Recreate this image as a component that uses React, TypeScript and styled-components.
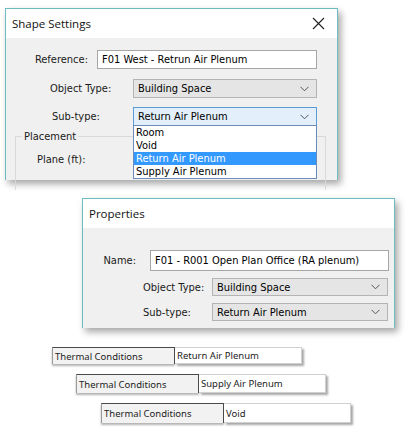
import styled, { createGlobalStyle } from 'styled-components';

const GlobalStyle = createGlobalStyle`
  html, body {
    margin: 0;
    padding: 0;
    background: #ffffff;
  }
  body {
    width: 410px;
    height: 439px;
    overflow: hidden;
    font-family: 'DejaVu Sans Condensed', Tahoma, 'DejaVu Sans', sans-serif;
    font-size: 11px;
    color: #000;
  }
`;

const Page = styled.div`
  display: flex;
  flex-direction: column;
  padding-top: 8px;
`;

const Dialog = styled.div<{ $left: number; $width: number; $height: number; $top: number }>`
  margin-left: ${p => p.$left}px;
  margin-top: ${p => p.$top}px;
  width: ${p => p.$width}px;
  height: ${p => p.$height}px;
  box-sizing: border-box;
  border: 1px solid #6dbcc3;
  border-bottom: none;
  background: #f0f0f0;
  box-shadow: 3px 4px 7px rgba(0, 0, 0, 0.35);
  display: flex;
  flex-direction: column;
`;

const TitleBar = styled.div`
  height: 29px;
  flex: none;
  background: #fff;
  display: flex;
  align-items: center;
  justify-content: space-between;
  padding: 0 12px 0 6px;
  font-family: 'Open Sans', 'Noto Sans', sans-serif;
  font-size: 11.5px;
  color: #111;
`;

const CloseIcon = styled.svg`
  width: 13px;
  height: 13px;
`;

const Body = styled.div<{ $pad: number }>`
  flex: 1;
  position: relative;
  padding-top: ${p => p.$pad}px;
  display: flex;
  flex-direction: column;
  overflow: visible;
`;

const Row = styled.div<{ $gap: number }>`
  display: flex;
  align-items: center;
  margin-bottom: ${p => p.$gap}px;
`;

const Label = styled.div<{ $width: number; $indent?: number; $right?: boolean }>`
  width: ${p => p.$width}px;
  flex: none;
  box-sizing: border-box;
  padding-left: ${p => p.$indent ?? 0}px;
  text-align: ${p => (p.$right ? 'right' : 'left')};
  color: #1a1a1a;
  white-space: nowrap;
`;

const TextBox = styled.div<{ $width: number; $height: number }>`
  width: ${p => p.$width}px;
  height: ${p => p.$height}px;
  box-sizing: border-box;
  border: 1px solid #a6a6a6;
  background: #fff;
  display: flex;
  align-items: center;
  padding-left: 4px;
  white-space: nowrap;
`;

const Select = styled.div<{ $width: number; $height: number; $focused?: boolean }>`
  position: relative;
  width: ${p => p.$width}px;
  height: ${p => p.$height}px;
  box-sizing: border-box;
  border: 1px solid ${p => (p.$focused ? '#5a9bd8' : '#b4b4b4')};
  background: ${p => (p.$focused ? '#e3effa' : '#e5e5e5')};
  display: flex;
  align-items: center;
  justify-content: space-between;
  padding: 0 7px 0 4px;
  white-space: nowrap;
`;

const Chevron = styled.svg`
  width: 9px;
  height: 6px;
  flex: none;
`;

const DropList = styled.div`
  position: absolute;
  z-index: 2;
  top: 100%;
  left: -1px;
  right: -1px;
  box-sizing: border-box;
  border: 1px solid #6b8cb8;
  background: #fff;
  display: flex;
  flex-direction: column;
`;

const DropItem = styled.div<{ $active?: boolean }>`
  height: 13px;
  line-height: 13px;
  padding-left: 2px;
  background: ${p => (p.$active ? '#3399ff' : '#fff')};
  color: ${p => (p.$active ? '#fff' : '#000')};
`;

const GroupBox = styled.fieldset`
  margin: 4px 0 0 9px;
  width: 311px;
  height: 60px;
  box-sizing: border-box;
  border: 1px solid #d9d9d9;
  border-bottom: none;
  padding: 10px 0 0 21px;
  legend {
    padding: 0 2px;
    margin-left: -15px;
    color: #1a1a1a;
  }
`;

const ThermalList = styled.div`
  display: flex;
  flex-direction: column;
  margin-top: 19px;
`;

const ThermalRow = styled.div<{ $left: number; $top: number; $height: number }>`
  display: flex;
  margin-left: ${p => p.$left}px;
  margin-top: ${p => p.$top}px;
  height: ${p => p.$height}px;
  font-family: 'Noto Sans', 'Open Sans', sans-serif;
  font-size: 9.5px;
  color: #222;
`;

const ThermalLabel = styled.div`
  width: 123px;
  box-sizing: border-box;
  background: #f2f2f2;
  border-top: 1.5px solid #4a4a4a;
  border-right: 1.5px solid #4a4a4a;
  border-left: 1px solid #9a9a9a;
  box-shadow: 0 2px 2px rgba(0, 0, 0, 0.3);
  display: flex;
  align-items: center;
  padding-left: 2px;
  white-space: nowrap;
`;

const ThermalValue = styled.div`
  width: 127px;
  box-sizing: border-box;
  background: #fff;
  border: 1px solid #d0d0d0;
  border-left: none;
  box-shadow: 2px 2px 2px rgba(0, 0, 0, 0.35);
  display: flex;
  align-items: center;
  padding-left: 2px;
  white-space: nowrap;
`;

const ChevronDown = () => (
  <Chevron viewBox="0 0 9 6">
    <polyline points="0.5,0.8 4.5,4.8 8.5,0.8" fill="none" stroke="#555" strokeWidth="1" />
  </Chevron>
);

const thermal = [
  { left: 52, top: 0, height: 17, value: 'Return Air Plenum' },
  { left: 76, top: 10, height: 19, value: 'Supply Air Plenum' },
  { left: 101, top: 10, height: 20, value: 'Void' },
];

export default function App() {
  return (
    <>
      <GlobalStyle />
      <Page>
        <Dialog $left={5} $top={0} $width={333} $height={172}>
          <TitleBar>
            <span>Shape Settings</span>
            <CloseIcon viewBox="0 0 13 13">
              <path d="M1 1 L12 12 M12 1 L1 12" stroke="#222" strokeWidth="1.1" />
            </CloseIcon>
          </TitleBar>
          <Body $pad={12}>
            <Row $gap={10}>
              <Label $width={82} $right>Reference:</Label>
              <span style={{ width: 9 }} />
              <TextBox $width={220} $height={19}>F01 West - Retrun Air Plenum</TextBox>
            </Row>
            <Row $gap={9}>
              <Label $width={127} $indent={44}>Object Type:</Label>
              <Select $width={184} $height={19}>
                Building Space
                <ChevronDown />
              </Select>
            </Row>
            <Row $gap={0}>
              <Label $width={127} $indent={46}>Sub-type:</Label>
              <Select $width={184} $height={19} $focused>
                Return Air Plenum
                <ChevronDown />
                <DropList>
                  <DropItem>Room</DropItem>
                  <DropItem>Void</DropItem>
                  <DropItem $active>Return Air Plenum</DropItem>
                  <DropItem>Supply Air Plenum</DropItem>
                </DropList>
              </Select>
            </Row>
            <GroupBox>
              <legend>Placement</legend>
              <Label $width={80}>Plane (ft):</Label>
            </GroupBox>
          </Body>
        </Dialog>

        <Dialog $left={82} $top={18} $width={313} $height={130}>
          <TitleBar>
            <span>Properties</span>
          </TitleBar>
          <Body $pad={22}>
            <Row $gap={7}>
              <Label $width={53} $right>Name:</Label>
              <span style={{ width: 14 }} />
              <TextBox $width={239} $height={21}>F01 - R001 Open Plan Office (RA plenum)</TextBox>
            </Row>
            <Row $gap={7}>
              <Label $width={129} $indent={60}>Object Type:</Label>
              <Select $width={176} $height={18}>
                Building Space
                <ChevronDown />
              </Select>
            </Row>
            <Row $gap={0}>
              <Label $width={129} $indent={60}>Sub-type:</Label>
              <Select $width={176} $height={18}>
                Return Air Plenum
                <ChevronDown />
              </Select>
            </Row>
          </Body>
        </Dialog>

        <ThermalList>
          {thermal.map(t => (
            <ThermalRow key={t.value} $left={t.left} $top={t.top} $height={t.height}>
              <ThermalLabel>Thermal Conditions</ThermalLabel>
              <ThermalValue>{t.value}</ThermalValue>
            </ThermalRow>
          ))}
        </ThermalList>
      </Page>
    </>
  );
}
